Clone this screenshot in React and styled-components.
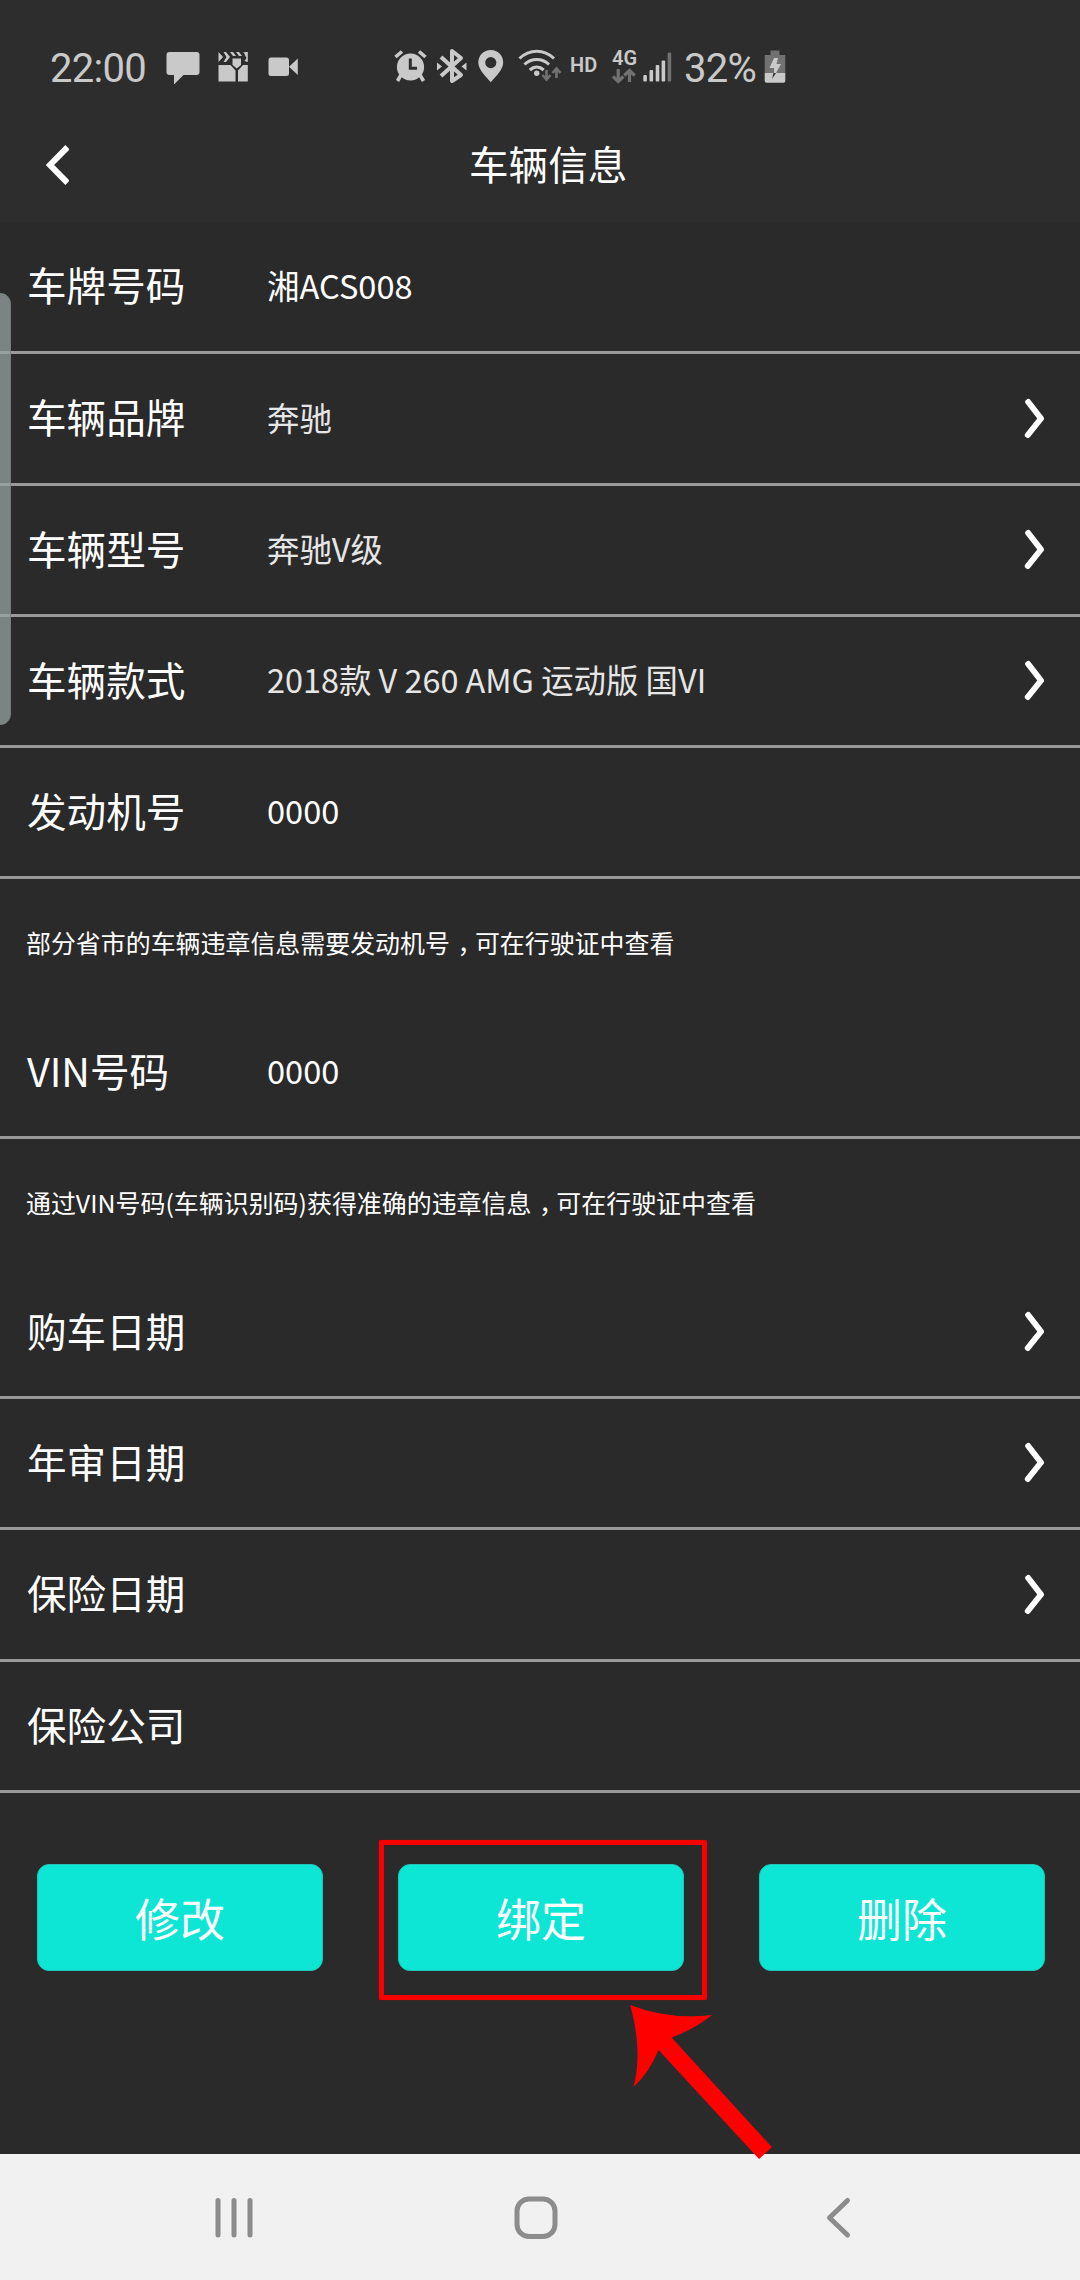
import React from 'react'
import styled, {createGlobalStyle} from 'styled-components'

const GlobalStyle = createGlobalStyle`
    body {
        margin: 0;
        background: #2a2a2a;
    }

    * {
        box-sizing: border-box;
    }
`

const Screen = styled.div`
    position: relative;
    display: flex;
    flex-direction: column;
    width: 1080px;
    height: 2280px;
    overflow: hidden;
    background: #2a2a2a;
    color: #fff;
    font-family: "Noto Sans CJK SC", sans-serif;
    font-weight: 400;
    white-space: nowrap;
`

const Top = styled.header`
    flex: none;
    height: 222px;
    background: #2d2d2d;
`

const StatusBar = styled.div`
    display: flex;
    align-items: flex-start;
    height: 108px;
    padding: 48px 0 0 50px;
    color: #c9c9c9;
    font-family: Roboto, sans-serif;
`

const StatusText = styled.span`
    width: ${props => props.$width}px;
    margin-left: ${props => props.$gap || 0}px;
    padding-top: 1px;
    font-size: 40px;
    line-height: 40px;
    letter-spacing: ${props => props.$spacing || 0}px;
`

const StatusIcon = styled.svg`
    flex: none;
    height: 36px;
    margin-left: ${props => props.$gap}px;
    fill: currentColor;
`

const Hd = styled.span`
    width: 28px;
    margin-left: 8px;
    font-size: 20px;
    font-weight: 600;
    line-height: 35px;
`

const Network = styled.div`
    display: flex;
    flex-direction: column;
    width: 26px;
    margin-left: 14px;
    font-size: 20px;
    font-weight: 600;
    line-height: 20px;
`

const TitleBar = styled.div`
    display: flex;
    align-items: center;
    height: 114px;
    padding-left: 43px;
`

const Title = styled.h1`
    margin: 0 0 0 400px;
    padding-bottom: 5px;
    font-size: 39.6px;
    font-weight: 400;
    line-height: 60px;
`

const Row = styled.div`
    display: flex;
    flex: none;
    align-items: center;
    height: ${props => props.$height || 131}px;
    padding: 0 34px 0 27px;
    border-bottom: 3px solid #999;
`

const Label = styled.span`
    width: 240px;
    padding-bottom: 5px;
    font-size: 39.6px;
    line-height: 60px;
`

const Value = styled.span`
    flex: 1;
    padding-bottom: 4px;
    color: ${props => (props.$picked ? '#e6e6e6' : '#fff')};
    font-size: ${props => (props.$picked ? 32.4 : 32.6)}px;
    line-height: 50px;
`

const Hint = styled.p`
    display: flex;
    flex: none;
    align-items: center;
    height: 129px;
    margin: 0;
    padding: 0 0 3px 26px;
    font-size: 24.95px;
    line-height: 40px;
`

// half-width glyph set in the middle of a full em
const Comma = styled.span`
    width: 1em;
    padding-left: 0.3em;
    font-feature-settings: "halt";
`

const Actions = styled.div`
    display: flex;
    gap: 75px;
    padding: 71px 35px 0 37px;
`

const Action = styled.button`
    width: 286px;
    height: 107px;
    padding: 0;
    border: 1px solid #1fc4b8;
    border-radius: 12px;
    background: #0de6d5;
    color: #fff;
    font-family: inherit;
    font-size: 45px;
    line-height: 64px;
`

const NavBar = styled.nav`
    display: flex;
    flex: none;
    align-items: center;
    height: 126px;
    margin-top: auto;
    padding: 2px 0 0 214px;
    background: #f1f1f1;
`

const NavIcon = styled.svg`
    margin-right: ${props => props.$after}px;
    fill: none;
    stroke: #8c8c8c;
    stroke-width: 5;
    stroke-linecap: round;
    stroke-linejoin: round;
`

// the parts below float above the page
const EdgeHandle = styled.div`
    position: absolute;
    top: 293px;
    left: 0;
    width: 11px;
    height: 432px;
    border-right: 1px solid rgba(110, 122, 120, 0.7);
    border-radius: 0 11px 11px 0;
    background: rgba(151, 162, 161, 0.75);
`

const Highlight = styled.div`
    position: absolute;
    top: 1840px;
    left: 379px;
    width: 328px;
    height: 160px;
    border: 5px solid #f80000;
    border-radius: 2px;
    box-shadow: 0 0 1px #f00;
`

const Pointer = styled.svg`
    position: absolute;
    top: 2000px;
    left: 625px;
    fill: #f00;
`

const Chevron = () => (
    <svg width="22" height="42" viewBox="0 0 22 42" fill="none" stroke="#fff" strokeWidth="6"
         strokeLinecap="round" strokeLinejoin="round">
        <path d="M4.2 4L17 20.5L3.8 37"/>
    </svg>
)

const Field = ({label, value, picked, arrow, height}) => (
    <Row $height={height}>
        <Label>{label}</Label>
        <Value $picked={picked}>{value}</Value>
        {arrow && <Chevron/>}
    </Row>
)

const Status = () => (
    <StatusBar>
        <StatusText $width={107} $spacing={-0.7}>22:00</StatusText>
        <StatusIcon $gap={9} width="34" viewBox="0 0 34 36">
            <path d="M3.5 4H30.5Q33.5 4 33.5 7V24Q33.5 27 30.5 27H17.5L8 36.5V27H3.5Q.5 27 .5 24V7Q.5 4 3.5 4Z"/>
        </StatusIcon>
        <StatusIcon $gap={18} width="30" viewBox="0 0 30 36">
            <path d="M.5 4L5 9L.5 14Z M5.5 4H8L12 9L8 14H5.5L8.5 9Z M12 4H15L18 8H15Z M18 4H21L24 8H21Z M24.5 4H29.8V6Z M25.5 4H29.8V14L26.5 13L28.5 10Z"/>
            <path d="M14.5 10.5H23V17L18.8 20.5L14.5 17Z"/>
            <path d="M.5 17H12.5L17.5 22.5V33.5H.5Z M20 22.5L25 17H29.8V33.5H20Z"/>
        </StatusIcon>
        <StatusIcon $gap={20} width="30" viewBox="0 0 30 36">
            <path d="M3 9.5H18.5Q21 9.5 21 12V25.5Q21 28 18.5 28H3Q.5 28 .5 25.5V12Q.5 9.5 3 9.5Z M21 18.7L29.8 10.5V27Z"/>
        </StatusIcon>

        <StatusIcon $gap={96} width="33" viewBox="0 0 33 36">
            <path d="M7 27L3.5 33M26 27L29.5 33M1.5 9L8 3.5M31.5 9L25 3.5" fill="none" stroke="currentColor"
                  strokeWidth="3.6"/>
            <circle cx="16.5" cy="19" r="13.6"/>
            <path d="M16.3 10.5V20.2H23" fill="none" stroke="#2d2d2d" strokeWidth="3"/>
        </StatusIcon>
        <StatusIcon $gap={10} width="30" viewBox="0 0 30 36">
            <path d="M4 9L24 27L15 33V3L24 10L4 28" fill="none" stroke="currentColor" strokeWidth="4"
                  strokeLinejoin="round"/>
            <path d="M0 14.5L5 18.5L0 22.5ZM29.5 14.5L24.5 18.5L29.5 22.5Z"/>
        </StatusIcon>
        <StatusIcon $gap={11} width="26" viewBox="0 0 26 36">
            <path fillRule="evenodd"
                  d="M12.8 2C5.8 2 .3 7.3 .3 14.2C.3 22 8.5 29 12.8 34.2C17 29 25.2 22 25.2 14.2C25.2 7.3 19.7 2 12.8 2ZM12.8 9A5.6 5.6 0 1 1 12.8 20.2A5.6 5.6 0 1 1 12.8 9Z"/>
        </StatusIcon>
        <StatusIcon $gap={14} width="44" viewBox="0 0 44 36">
            <path d="M1.5 10.5C11.5 .8 26 .8 36 10.5M6.5 16.5C13.5 9.8 24 9.8 31 16.5M11.8 22C16 18.2 21.5 18.2 25.7 22"
                  fill="none" stroke="currentColor" strokeWidth="3.1"/>
            <circle cx="18.7" cy="25.3" r="2.7"/>
            <path d="M28.5 22V31M24.5 27L28.5 31.5L32.5 27M38.5 30V21M34.5 25L38.5 20.5L42.5 25" fill="none"
                  stroke="#717171" strokeWidth="2.6"/>
        </StatusIcon>
        <Hd>HD</Hd>
        <Network>
            4G
            <svg width="26" height="16" viewBox="0 0 26 16" fill="none" stroke="#717171" strokeWidth="3.2">
                <path d="M6.2 1V13M1 8.5L6.2 13.5L11.4 8.5M17.5 14V3M12.3 7.5L17.5 2.5L22.7 7.5"/>
            </svg>
        </Network>
        <StatusIcon $gap={5} width="29" viewBox="0 0 29 36">
            <rect x=".3" y="27" width="3.6" height="6.5" rx="1"/>
            <rect x="6.5" y="22" width="3.6" height="11.5" rx="1"/>
            <rect x="12.7" y="17" width="3.6" height="16.5" rx="1"/>
            <rect x="18.6" y="12.5" width="3.6" height="21" rx="1"/>
            <rect x="24.6" y="4.5" width="3.6" height="29" rx="1" fill="#717171"/>
        </StatusIcon>
        <StatusText $width={75} $gap={12} $spacing={-0.7}>32%</StatusText>
        <StatusIcon $gap={5} width="22" viewBox="0 0 22 36">
            <path d="M6.5 2.5H15.5V7H21.3V25H.7V7H6.5Z" fill="#717171"/>
            <path d="M.7 25H21.3V33Q21.3 34.8 19.5 34.8H2.5Q.7 34.8 .7 33Z"/>
            <path d="M10 10H14L12.5 16H17L12 25H10V20H5.5Z"/>
            <path d="M9.5 25H12L8 31Z" fill="#2d2d2d"/>
        </StatusIcon>
    </StatusBar>
)

const App = () => (
    <React.Fragment>
        <GlobalStyle/>
        <Screen>
            <Top>
                <Status/>
                <TitleBar>
                    <svg width="26" height="42" viewBox="0 0 26 42" fill="none" stroke="#fff" strokeWidth="6">
                        <path d="M24.5 3.2L7 21L24.5 38.8"/>
                    </svg>
                    <Title>车辆信息</Title>
                </TitleBar>
            </Top>

            <Field label="车牌号码" value="湘ACS008" height={132}/>
            <Field label="车辆品牌" value="奔驰" picked arrow height={132}/>
            <Field label="车辆型号" value="奔驰V级" picked arrow/>
            <Field label="车辆款式" value="2018款 V 260 AMG 运动版 国VI" picked arrow/>
            <Field label="发动机号" value="0000"/>
            <Hint>部分省市的车辆违章信息需要发动机号<Comma>，</Comma>可在行驶证中查看</Hint>
            <Field label="VIN号码" value="0000"/>
            <Hint>通过VIN号码(车辆识别码)获得准确的违章信息<Comma>，</Comma>可在行驶证中查看</Hint>
            <Field label="购车日期" arrow/>
            <Field label="年审日期" arrow/>
            <Field label="保险日期" arrow height={132}/>
            <Field label="保险公司"/>

            <Actions>
                <Action>修改</Action>
                <Action>绑定</Action>
                <Action>删除</Action>
            </Actions>

            <NavBar>
                <NavIcon $after={259} width="40" height="44" viewBox="0 0 40 44">
                    <path d="M4 4.5V39M20 4.5V39M36 4.5V39"/>
                </NavIcon>
                <NavIcon $after={265} width="46" height="44" viewBox="0 0 46 44">
                    <rect x="4" y="3" width="38" height="37.5" rx="12"/>
                </NavIcon>
                <NavIcon $after={0} width="28" height="44" viewBox="0 0 28 44">
                    <path d="M23.5 4.5L5.5 21.7L23.5 39"/>
                </NavIcon>
            </NavBar>

            <EdgeHandle/>
            <Highlight/>
            <Pointer width="150" height="162" viewBox="0 0 150 162">
                <path d="M5.3 5Q43 20 87 15Q70 29 46.5 37.5L147 147.3L134 159L33.5 50Q24 73 8.5 87Q18 52 5.3 5Z"/>
            </Pointer>
        </Screen>
    </React.Fragment>
)

export default App
